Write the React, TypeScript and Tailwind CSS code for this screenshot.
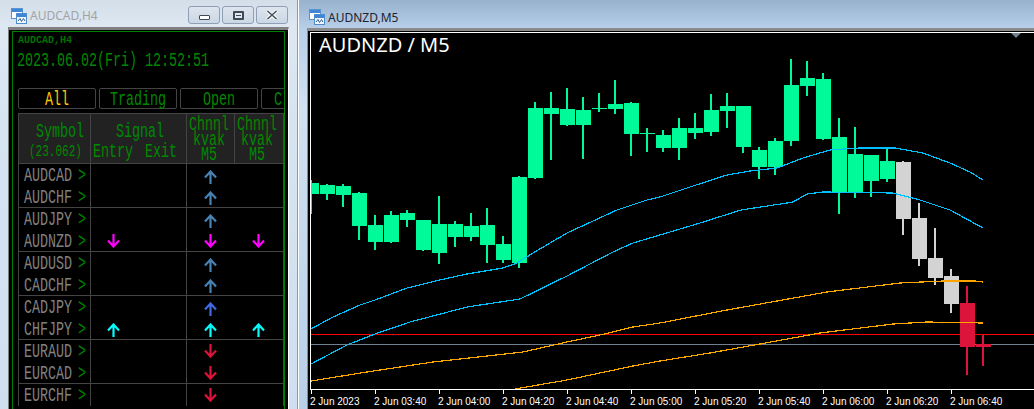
import React from "react";

const T = ({ s, className = "" }: { s: string; className?: string }) => (
  <span className="inline-block h-[20px] shrink-0 overflow-visible" style={{ width: s.length * 8 }}>
    <span className={"block origin-left scale-x-[0.667] whitespace-pre font-['Liberation_Mono',monospace] text-[20px] leading-[21px] " + className}>{s}</span>
  </span>
);

const Arrow = ({ dir, color }: { dir: "u" | "d"; color: string }) => (
  <svg width="13" height="14" viewBox="0 0 13 14" className={"block shrink-0 " + (dir === "u" ? "mt-[3px]" : "")} style={{ color }}>
    {dir === "u" ? (
      <path d="M6.5 14V1.5M1 7.5L6.5 1.5L12 7.5" fill="none" stroke="currentColor" strokeWidth="2.2" />
    ) : (
      <path d="M6.5 0V12.5M1 6.5L6.5 12.5L12 6.5" fill="none" stroke="currentColor" strokeWidth="2.2" />
    )}
  </svg>
);

const AppIcon = () => (
  <svg width="16" height="16" viewBox="0 0 16 16" className="block shrink-0">
    <rect x="0.5" y="0.5" width="11" height="10" fill="#fff" stroke="#5b93cf" />
    <rect x="1" y="1" width="10" height="3" fill="#3f86d6" />
    <rect x="5.5" y="5.5" width="10" height="10" fill="#eef6ff" stroke="#4f8ccc" />
    <rect x="6" y="6" width="9" height="3" fill="#3f86d6" />
    <path d="M7 13L9 10.5L10.5 13.5L12.5 10.5L14 13" fill="none" stroke="#36608f" strokeWidth="1" />
  </svg>
);

const CaptionButton = ({ children }: { children: React.ReactNode }) => (
  <div className="flex h-[18px] w-[32px] items-center justify-center rounded-[3px] border border-[#8f9fb5] bg-[linear-gradient(to_bottom,#dde5ee,#cbd7e5)]">
    {children}
  </div>
);

const U = "#4682b4";
const rows: { s: string; a?: [string, string]; b: [string, string]; c?: [string, string] }[] = [
  { s: "AUDCAD", b: ["u", U] },
  { s: "AUDCHF", b: ["u", U] },
  { s: "AUDJPY", b: ["u", U] },
  { s: "AUDNZD", a: ["d", "#ff00ff"], b: ["d", "#ff00ff"], c: ["d", "#ff00ff"] },
  { s: "AUDUSD", b: ["u", U] },
  { s: "CADCHF", b: ["u", U] },
  { s: "CADJPY", b: ["u", "#4169e1"] },
  { s: "CHFJPY", a: ["u", "#00ffff"], b: ["u", "#00ffff"], c: ["u", "#00ffff"] },
  { s: "EURAUD", b: ["d", "#dc143c"] },
  { s: "EURCAD", b: ["d", "#dc143c"] },
  { s: "EURCHF", b: ["d", "#dc143c"] },
];

const G = "text-[#008800]";

const LeftWindow = () => (
  <div className="flex h-full w-[297px] shrink-0 flex-col bg-[linear-gradient(to_bottom,#d3dee9,#dde8f2_27px,#d6e4f2_120px,#cfdfef)]">
    <div className="flex h-[27px] shrink-0 items-start pl-[11px] pr-[9px] pt-[6px]">
      <div className="mt-[2px]"><AppIcon /></div>
      <span className="ml-[3px] mt-[1px] font-['Noto_Sans',sans-serif] text-[12px] leading-[17px] text-[#a3a3a3]">AUDCAD,H4</span>
      <div className="ml-auto flex gap-[2px]">
        <CaptionButton>
          <div className="mt-[4px] h-[5px] w-[11px] rounded-[1px] border border-[#3f4a58] bg-white" />
        </CaptionButton>
        <CaptionButton>
          <div className="flex h-[9px] w-[11px] items-center justify-center rounded-[1px] border-2 border-[#3f4a58] bg-[#dfe7f0]">
            <div className="h-px w-[5px] bg-[#3f4a58]" />
          </div>
        </CaptionButton>
        <CaptionButton>
          <svg width="12" height="10" viewBox="0 0 12 10" className="block">
            <path d="M1.5 1L10.5 9M10.5 1L1.5 9" stroke="#fff" strokeWidth="3.4" />
            <path d="M1.5 1L10.5 9M10.5 1L1.5 9" stroke="#46505e" strokeWidth="1.6" />
          </svg>
        </CaptionButton>
      </div>
    </div>
    <div className="ml-[8px] w-[281px] flex-1 overflow-hidden border-l border-r border-t-[3px] border-l-[#808080] border-r-white border-t-[#808080] bg-black pl-[3px] pr-[3px] pt-px">
      <div className="h-[400px] w-[273px] overflow-hidden border-l border-r border-t border-[#008000] pl-[5px]">
        <div className="mt-px h-[16px] font-['Liberation_Mono',monospace] text-[10px] font-bold leading-[16px] text-[#007000]">AUDCAD,H4</div>
        <div className="-ml-px mt-px flex h-[20px]"><T s="2023.06.02(Fri) 12:52:51" className={G} /></div>
        <div className="mt-[18px] flex h-[21px] gap-[3px]">
          {["All", "Trading", "Open", "C"].map((l, i) => (
            <div key={l} className={"flex h-[21px] w-[78px] shrink-0 items-center rounded-[2px] border border-[#444] " + (i === 3 ? "justify-start pl-[12px]" : "justify-center")}>
              <T s={l} className={i === 0 ? "text-[#ffc800]" : G} />
            </div>
          ))}
        </div>
        <div className="mt-[4px] w-[266px] border-r border-t border-[#444]">
          <div className="grid h-[50px] grid-cols-[72px_96px_48px_49px] border-b border-[#444] bg-[#222]">
            <div className="flex flex-col border-l border-[#444] pt-[7px]">
              <div className="flex h-[22px] pl-[17px]"><T s="Symbol" className={G} /></div>
              <div className="h-[18px] pl-[10px]">
                <span className="block origin-left scale-x-[0.688] whitespace-pre font-['Liberation_Mono',monospace] text-[16px] leading-[18px] text-[#008800]">(23.062)</span>
              </div>
            </div>
            <div className="flex flex-col border-l border-[#444] pt-[7px]">
              <div className="flex h-[20px] pl-[25px]"><T s="Signal" className={G} /></div>
              <div className="flex h-[20px] gap-[12px] pl-[2px]"><T s="Entry" className={G} /><T s="Exit" className={G} /></div>
            </div>
            {[2, 3].map((k) => (
              <div key={k} className="flex flex-col border-l border-[#444] pl-[2px]">
                {["Chnnl", "kvak", "M5"].map((l) => (
                  <div key={l} className="flex h-[15px] w-[40px] justify-center"><T s={l} className={G} /></div>
                ))}
              </div>
            ))}
          </div>
          {rows.map((r, i) => (
            <div key={r.s} className={"grid h-[22px] grid-cols-[72px_96px_48px_49px] " + (i % 2 ? "border-b border-[#444]" : "")}>
              <div className="flex items-center border-l border-[#444] pl-[5px]">
                <T s={r.s} className="text-[#808080]" />
                <span className="ml-[6px] flex"><T s=">" className="text-[#008000]" /></span>
              </div>
              <div className="flex items-center border-l border-[#444] pl-[16px]">
                {r.a && <Arrow dir={r.a[0] as "u"} color={r.a[1]} />}
              </div>
              <div className="flex items-center border-l border-[#444] pl-[17px]">
                <Arrow dir={r.b[0] as "u"} color={r.b[1]} />
              </div>
              <div className="flex items-center pl-[18px]">
                {r.c && <Arrow dir={r.c[0] as "u"} color={r.c[1]} />}
              </div>
            </div>
          ))}
        </div>
      </div>
    </div>
  </div>
);

// [bodyTop, bodyBottom, wickTop, wickBottom]
const green: number[][] = [
  [183, 194, 180, 214], [185, 194, 184, 200], [186, 195, 184, 207], [193, 226, 192, 240], [225, 242, 215, 250],
  [215, 242, 211, 243], [213, 220, 210, 227], [220, 250, 220, 251], [224, 253, 196, 264], [224, 237, 221, 247],
  [226, 237, 213, 241], [225, 245, 208, 263], [244, 260, 236, 263], [177, 263, 176, 268], [108, 178, 102, 179],
  [108, 114, 92, 160], [109, 125, 88, 126], [110, 125, 97, 159], [108, 109, 93, 112], [104, 109, 80, 114],
  [103, 134, 102, 156], [133, 134, 128, 152], [135, 148, 130, 152], [128, 148, 118, 160], [128, 133, 113, 139],
  [110, 132, 94, 136], [106, 111, 93, 128], [106, 147, 106, 153], [150, 167, 147, 179], [141, 167, 138, 175],
  [85, 141, 59, 146], [78, 86, 61, 96], [79, 139, 73, 140], [137, 192, 118, 214], [154, 192, 127, 198],
  [155, 181, 155, 197], [161, 179, 147, 182],
];
const gray: number[][] = [[162, 219, 161, 235], [218, 259, 203, 266], [258, 278, 228, 285], [276, 304, 269, 313]];
const red: number[][] = [[303, 347, 286, 375], [344, 347, 335, 366]];
const candles = [
  ...green.map((c) => ({ c, f: "#00fa9a" })),
  ...gray.map((c) => ({ c, f: "#d3d3d3" })),
  ...red.map((c) => ({ c, f: "#dc143c" })),
];

const blue1 = "311,329 333,317 360,305 375,300 407,288 440,280 467,274 503,268 517,263 533,253 567,233 617,210 647,200 660,197 693,186 727,175 750,171 777,168 803,158 830,150 860,148 895,148 923,153 950,163 970,172 983,180";
const blue2 = "311,364 347,345 375,334 410,322 467,307 520,299 567,276 613,252 633,243 670,232 700,223 741,210 787,203 793,202 807,194 823,192 893,193 920,200 950,210 983,228";
const orange1 = "311,381 367,372 433,362 523,352 567,342 600,335 633,327 660,323 727,310 827,292 900,283 943,281 975,281 983,282";
const orange2 = "515,389 567,380 633,366 660,361 710,353 760,344 820,333 893,324 927,322 983,323";

const Chart = () => (
  <svg width="724" height="356" viewBox="310 33 724 356" className="block shrink-0">
    <g shapeRendering="crispEdges">
      <rect x="311" y="334" width="723" height="1" fill="#ff0000" />
      <rect x="311" y="344" width="723" height="1" fill="#708090" />
      {candles.map(({ c, f }, i) => (
        <g key={i} fill={f}>
          <rect x={310 + 16 * i} y={c[2]} width="2" height={c[3] - c[2]} />
          <rect x={304 + 16 * i} y={c[0]} width="15" height={c[1] - c[0]} />
        </g>
      ))}
      <polyline points={blue1} fill="none" stroke="#00bfff" strokeWidth="1.2" />
      <polyline points={blue2} fill="none" stroke="#00bfff" strokeWidth="1.2" />
      <polyline points={orange1} fill="none" stroke="#ffa500" strokeWidth="1.2" />
      <polyline points={orange2} fill="none" stroke="#ffa500" strokeWidth="1.2" />
      <rect x="310" y="33" width="1" height="356" fill="#fff" />
    </g>
    <polygon points="1011,33 1021,33 1016,38" fill="#708090" />
  </svg>
);

const labels = ["2 Jun 2023", "2 Jun 03:40", "2 Jun 04:00", "2 Jun 04:20", "2 Jun 04:40", "2 Jun 05:00", "2 Jun 05:20", "2 Jun 05:40", "2 Jun 06:00", "2 Jun 06:20", "2 Jun 06:40"];

const RightWindow = () => (
  <div className="flex h-full flex-1 flex-col bg-[linear-gradient(to_bottom,#97b1ce,#b7cfe8_28px,#d0e1f1_110px,#b8cfe7)]">
    <div className="flex h-[28px] shrink-0 items-start pl-[10px] pt-[9px]">
      <AppIcon />
      <span className="ml-[3px] font-['Noto_Sans',sans-serif] text-[12px] leading-[17px] text-[#1c2430]">AUDNZD,M5</span>
    </div>
    <div className="ml-[8px] flex-1 border-l border-t-[3px] border-[#8a8a8a] bg-black pt-px">
      <div className="relative ml-[2px] border-t border-white">
        <span className="absolute left-[9px] top-[-2px] font-['Noto_Sans',sans-serif] text-[20px] leading-[28px] text-white">AUDNZD / M5</span>
        <Chart />
        <div className="flex h-[20px] border-t border-white pl-px">
          {labels.map((l) => (
            <div key={l} className="flex w-[64px] shrink-0 flex-col">
              <div className="h-[4px] w-px bg-white" />
              <span className="-ml-px whitespace-pre font-['Liberation_Sans',sans-serif] text-[10px] leading-[15px] text-white">{l}</span>
            </div>
          ))}
        </div>
      </div>
    </div>
  </div>
);

export default function App() {
  return (
    <div className="flex h-[409px] w-[1034px] overflow-hidden bg-[#d6e4f2]">
      <LeftWindow />
      <div className="h-full w-[2px] shrink-0 border-l border-[#8f9aa6] bg-white" />
      <RightWindow />
    </div>
  );
}
